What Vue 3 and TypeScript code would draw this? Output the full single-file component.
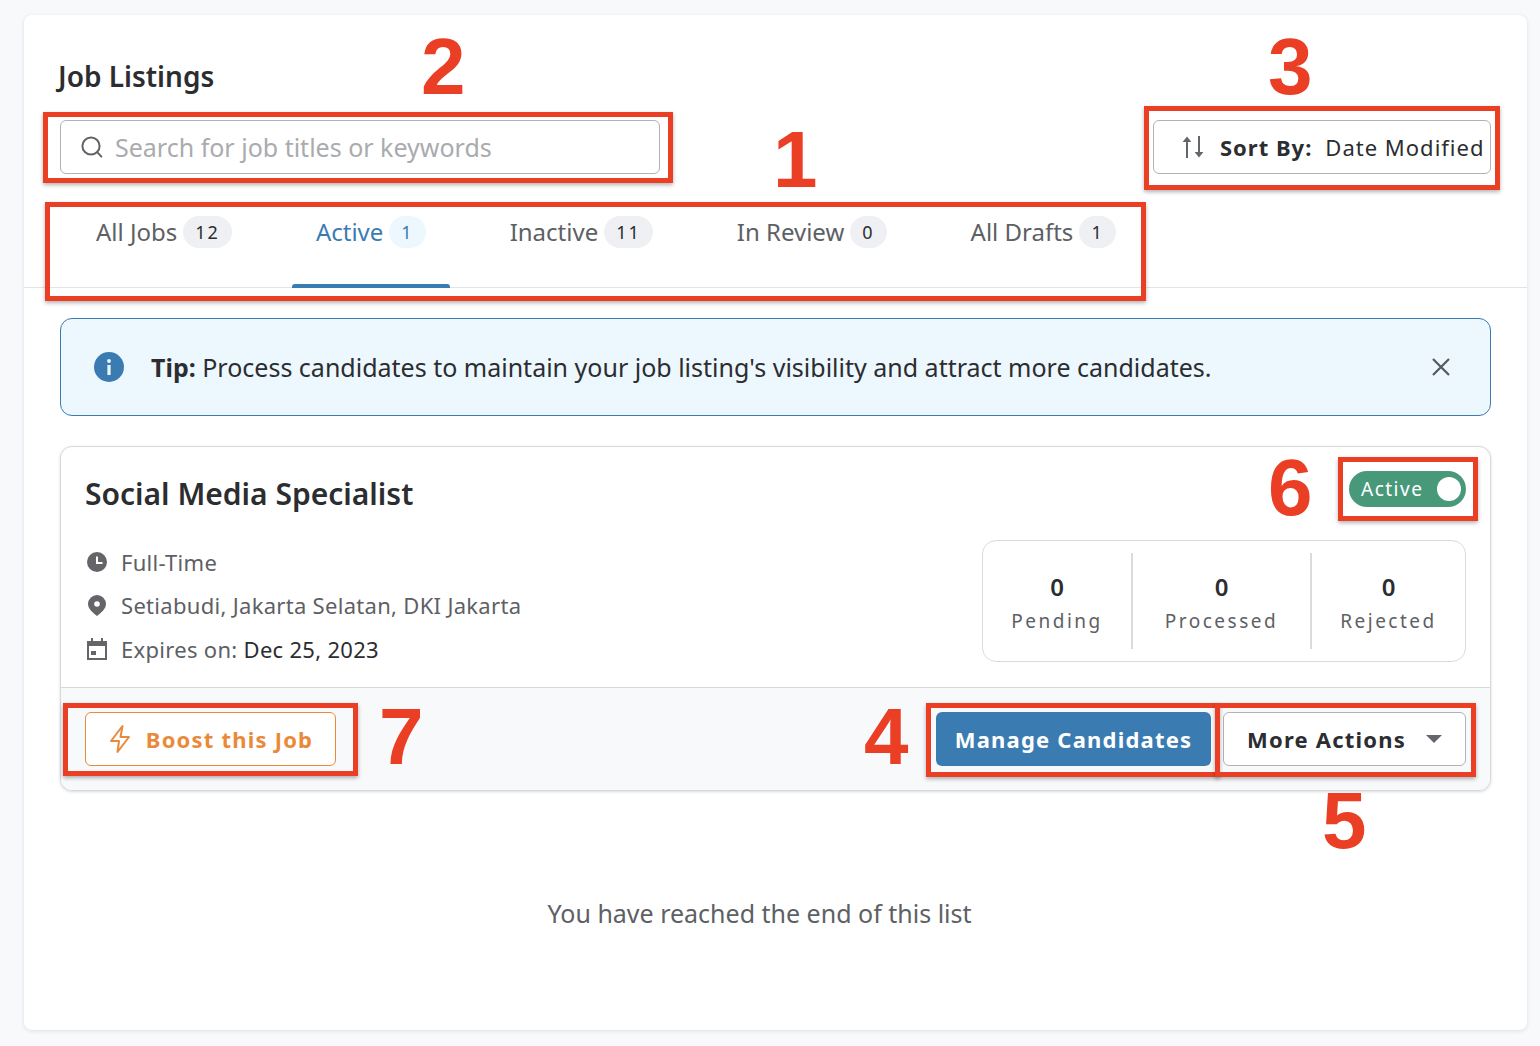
<script setup lang="ts">
interface Tab {
  label: string;
  count: number;
  active?: boolean;
}

interface Mark {
  key: string;
  cls: string;
}

const tabs: Tab[] = [
  { label: 'All Jobs', count: 12 },
  { label: 'Active', count: 1, active: true },
  { label: 'Inactive', count: 11 },
  { label: 'In Review', count: 0 },
  { label: 'All Drafts', count: 1 },
];

const stats = [
  { label: 'Pending', value: 0 },
  { label: 'Processed', value: 0 },
  { label: 'Rejected', value: 0 },
];

const boxes: Mark[] = [
  { key: 'b1', cls: 'box-tabs' },
  { key: 'b2', cls: 'box-search' },
  { key: 'b3', cls: 'box-sort' },
  { key: 'b4', cls: 'box-manage' },
  { key: 'b5', cls: 'box-more' },
  { key: 'b6', cls: 'box-toggle' },
  { key: 'b7', cls: 'box-boost' },
];

const numbers = [
  { n: 1, cls: 'num-1' },
  { n: 2, cls: 'num-2' },
  { n: 3, cls: 'num-3' },
  { n: 4, cls: 'num-4' },
  { n: 5, cls: 'num-5' },
  { n: 6, cls: 'num-6' },
  { n: 7, cls: 'num-7' },
];
</script>

<template>
  <div class="page">
    <main class="panel">
      <header class="head">
        <h1>Job Listings</h1>
        <div class="tools">
          <div class="search">
            <svg width="26" height="26" viewBox="0 0 26 26" fill="none" stroke="#5f6368" stroke-width="2">
              <circle cx="12" cy="12" r="8.6" />
              <path d="M18.4 18.4 22.4 22.6" stroke-linecap="round" />
            </svg>
            <span>Search for job titles or keywords</span>
          </div>
          <button class="sort">
            <svg width="26" height="26" viewBox="0 0 26 26" fill="none" stroke="#63666a" stroke-width="2">
              <path d="M7 24V5" />
              <path d="M2.6 8 7 2.4 11.4 8Z" fill="#63666a" stroke="none" />
              <path d="M19 2v19" />
              <path d="M14.6 18 19 23.6 23.4 18Z" fill="#63666a" stroke="none" />
            </svg>
            <b>Sort By:</b>
            <span>Date Modified</span>
          </button>
        </div>
      </header>

      <nav class="tabs">
        <div v-for="tab in tabs" :key="tab.label" class="tab" :class="{ active: tab.active }">
          <span>{{ tab.label }}</span>
          <i class="count">{{ tab.count }}</i>
        </div>
      </nav>

      <section class="body">
        <div class="tip">
          <svg class="tip-icon" width="30" height="30" viewBox="0 0 30 30">
            <circle cx="15" cy="15" r="15" fill="#3a7cb2" />
            <rect x="13.4" y="13" width="3.2" height="10" fill="#edf7fe" />
            <circle cx="15" cy="9" r="1.9" fill="#edf7fe" />
          </svg>
          <p><b>Tip:</b> Process candidates to maintain your job listing's visibility and attract more candidates.</p>
          <svg class="tip-close" width="20" height="20" viewBox="0 0 20 20" stroke="#55585c" stroke-width="2.2" fill="none">
            <path d="M2 2 18 18M18 2 2 18" />
          </svg>
        </div>

        <article class="job">
          <div class="job-top">
            <div class="job-title-row">
              <h2>Social Media Specialist</h2>
              <div class="toggle">
                <span>Active</span>
                <i class="knob"></i>
              </div>
            </div>
            <div class="job-info">
              <ul class="meta">
                <li>
                  <svg width="24" height="24" viewBox="0 0 24 24">
                    <circle cx="12" cy="12" r="10" fill="#636569" />
                    <path d="M12 6.5V13h5.5" fill="none" stroke="#fff" stroke-width="2" />
                  </svg>
                  <span>Full-Time</span>
                </li>
                <li>
                  <svg width="24" height="24" viewBox="0 0 24 24">
                    <path fill="#636569" d="M12 2a9 9 0 0 0-9 9c0 5 5 8.700 9 12 4-3.300 9-7 9-12a9 9 0 0 0-9-9Z" />
                    <circle cx="12" cy="11" r="2.800" fill="#fff" />
                  </svg>
                  <span>Setiabudi, Jakarta Selatan, DKI Jakarta</span>
                </li>
                <li>
                  <svg width="24" height="24" viewBox="0 0 24 24">
                    <path fill="#636569" d="M6 1h2v3h8V1h2v3h4v19H2V4h4V1Zm-2 8v12h16V9H4Z" />
                    <rect x="6" y="14" width="5" height="4" fill="#636569" />
                  </svg>
                  <span>Expires on: <em>Dec 25, 2023</em></span>
                </li>
              </ul>
              <div class="stats">
                <div v-for="stat in stats" :key="stat.label" class="stat" :class="stat.label.toLowerCase()">
                  <strong>{{ stat.value }}</strong>
                  <span>{{ stat.label }}</span>
                </div>
              </div>
            </div>
          </div>
          <footer class="job-foot">
            <button class="btn boost">
              <svg width="24" height="30" viewBox="0 0 24 30" fill="none" stroke="#e98a3a" stroke-width="2" stroke-linejoin="round">
                <path d="M14.500 2 3 17h8l-1.500 11L21 13h-8.500L14.500 2Z" />
              </svg>
              <span>Boost this Job</span>
            </button>
            <div class="actions">
              <button class="btn manage">Manage Candidates</button>
              <button class="btn more">
                <span>More Actions</span>
                <i class="caret"></i>
              </button>
            </div>
          </footer>
        </article>

        <p class="end">You have reached the end of this list</p>
      </section>
    </main>

    <div v-for="box in boxes" :key="box.key" class="mark-box" :class="box.cls"></div>
    <span v-for="item in numbers" :key="item.n" class="mark-num" :class="item.cls">{{ item.n }}</span>
  </div>
</template>

<style>
html,
body {
  margin: 0;
  background: #f7f9fb;
}
</style>

<style scoped>
.page {
  position: relative;
  box-sizing: border-box;
  width: 1540px;
  height: 1046px;
  padding: 15px 13px 16px 24px;
  font-family: "Noto Sans", "Open Sans", sans-serif;
  color: #2b2d30;
  overflow: hidden;
}

.panel {
  height: 100%;
  background: #fff;
  border-radius: 8px;
  box-shadow: 0 1px 4px rgba(30, 40, 60, 0.12);
}

.head {
  padding: 36px 36px 0;
}

h1 {
  margin: 0 0 18px -2px;
  font-size: 28px;
  line-height: 51px;
  font-weight: 600;
}

.tools {
  display: flex;
  justify-content: space-between;
}

.search,
.sort {
  box-sizing: border-box;
  height: 54px;
  display: flex;
  align-items: center;
  background: #fff;
  border: 1px solid #b1b3b6;
  border-radius: 6px;
}

.search {
  width: 600px;
  padding-left: 18px;
  gap: 10px;
  font-size: 25px;
  color: #a9abae;
}

.sort {
  width: 338px;
  padding: 0 0 0 26px;
  gap: 14px;
  font-family: inherit;
  font-size: 22px;
  letter-spacing: 1px;
  color: #2b2d30;
}

.sort b {
  font-weight: 700;
  margin-right: -1px;
}

.tabs {
  display: flex;
  gap: 36px;
  height: 114px;
  box-sizing: border-box;
  padding: 31px 0 0 48px;
  border-bottom: 1px solid #e2e4e7;
}

.tab {
  position: relative;
  display: flex;
  align-items: flex-start;
  gap: 6px;
  padding: 11px 24px 0;
  margin-top: 0;
  font-size: 24px;
  line-height: 32px;
  color: #5d6064;
}

.tab.active {
  color: #3a7cb2;
}

.tab.active::after {
  content: "";
  position: absolute;
  left: 0;
  right: 0;
  bottom: -1px;
  height: 4px;
  border-radius: 3px 3px 0 0;
  background: #3a7cb2;
}

.count {
  box-sizing: border-box;
  min-width: 36px;
  height: 32px;
  padding: 0 12px;
  border-radius: 16px;
  background: #eff0f4;
  font-style: normal;
  font-size: 18px;
  line-height: 32px;
  letter-spacing: 2px;
  text-align: center;
  color: #2b2d30;
}

.tab.active .count {
  background: #edf7fe;
  color: #3a7cb2;
}

.body {
  padding: 30px 36px 0;
}

.tip {
  box-sizing: border-box;
  height: 98px;
  display: flex;
  align-items: center;
  padding: 0 39px 0 33px;
  background: #edf7fe;
  border: 1px solid #3a7cb2;
  border-radius: 12px;
}

.tip p {
  flex: 1;
  margin: 0 0 0 27px;
  font-size: 25px;
  white-space: nowrap;
}

.tip b {
  font-weight: 700;
}

.job {
  margin-top: 30px;
  background: #fff;
  border: 1px solid #d6d8db;
  border-radius: 12px;
  box-shadow: 0 1px 3px rgba(30, 40, 60, 0.16);
  overflow: hidden;
}

.job-top {
  box-sizing: border-box;
  height: 240px;
  padding: 24px 24px 0;
}

.job-title-row {
  display: flex;
  justify-content: space-between;
  align-items: flex-start;
}

h2 {
  margin: 0;
  font-size: 30px;
  line-height: 46px;
  font-weight: 600;
}

.toggle {
  box-sizing: border-box;
  width: 117px;
  height: 36px;
  display: flex;
  align-items: center;
  justify-content: space-between;
  padding: 0 5px 0 12px;
  border-radius: 18px;
  background: #48997a;
  color: #fff;
  font-size: 19px;
  letter-spacing: 1.5px;
}

.knob {
  width: 24px;
  height: 24px;
  border-radius: 50%;
  background: #fff;
}

.job-info {
  display: flex;
  justify-content: space-between;
  margin-top: 23px;
}

.meta {
  list-style: none;
  margin: 0;
  padding: 0;
}

.meta li {
  display: flex;
  align-items: center;
  gap: 12px;
  height: 43.500px;
  font-size: 22px;
  letter-spacing: 0.3px;
  color: #5d6064;
}

.meta em {
  font-style: normal;
  color: #2b2d30;
}

.stats {
  box-sizing: border-box;
  width: 484px;
  height: 122px;
  display: flex;
  align-items: center;
  border: 1px solid #d9dbde;
  border-radius: 14px;
}

.stat {
  box-sizing: border-box;
  height: 96px;
  display: flex;
  flex-direction: column;
  align-items: center;
  justify-content: center;
}

.stat.pending {
  width: 148px;
}

.stat.processed {
  width: 181px;
  border-left: 2px solid #d9dbde;
  border-right: 2px solid #d9dbde;
}

.stat.rejected {
  width: 153px;
}

.stat strong {
  font-size: 24px;
  line-height: 36px;
  font-weight: 600;
}

.stat span {
  margin-top: 3px;
  font-size: 19px;
  line-height: 26px;
  letter-spacing: 2.5px;
  color: #5d6064;
}

.job-foot {
  box-sizing: border-box;
  height: 103px;
  display: flex;
  justify-content: space-between;
  align-items: flex-start;
  padding: 24px 24px 0;
  background: #f8f9fb;
  border-top: 1px solid #d6d8db;
}

.actions {
  display: flex;
  gap: 12px;
}

.btn {
  box-sizing: border-box;
  height: 54px;
  display: flex;
  align-items: center;
  justify-content: center;
  font-family: inherit;
  font-size: 22px;
  font-weight: 700;
  letter-spacing: 1.2px;
  border-radius: 6px;
  border: 1px solid transparent;
}

.boost {
  width: 251px;
  gap: 14px;
  background: #fff;
  border-color: #e98a3a;
  color: #e98a3a;
}

.manage {
  width: 275px;
  background: #3a7cb2;
  color: #fff;
}

.more {
  width: 243px;
  gap: 20px;
  background: #fff;
  border-color: #b1b3b6;
  color: #2b2d30;
}

.caret {
  width: 0;
  height: 0;
  border-left: 8px solid transparent;
  border-right: 8px solid transparent;
  border-top: 8px solid #63666a;
}

.end {
  margin: 105px 0 0;
  text-align: center;
  font-size: 25px;
  color: #5d6064;
  padding-right: 32px;
}

.mark-box {
  position: absolute;
  box-sizing: border-box;
  border: 5px solid #ea3f24;
  box-shadow: 0 2px 4px rgba(0, 0, 0, 0.3);
}

.box-tabs { left: 45px; top: 202px; width: 1101px; height: 99px; }
.box-search { left: 43px; top: 112px; width: 630px; height: 71px; }
.box-sort { left: 1144px; top: 106px; width: 356px; height: 84px; }
.box-manage { left: 926px; top: 703px; width: 294px; height: 74px; }
.box-more { left: 1215px; top: 703px; width: 261px; height: 74px; }
.box-toggle { left: 1338px; top: 457px; width: 140px; height: 64px; }
.box-boost { left: 63px; top: 703px; width: 295px; height: 73px; }

.mark-num {
  position: absolute;
  font-family: "Liberation Sans", Arial, sans-serif;
  font-weight: 700;
  font-size: 80px;
  line-height: 80px;
  color: #ea3f24;
}

.num-1 { left: 773px; top: 120px; }
.num-2 { left: 421px; top: 27px; }
.num-3 { left: 1268px; top: 27px; }
.num-4 { left: 864px; top: 697px; }
.num-5 { left: 1322px; top: 781px; }
.num-6 { left: 1268px; top: 448px; }
.num-7 { left: 379px; top: 697px; }
</style>
